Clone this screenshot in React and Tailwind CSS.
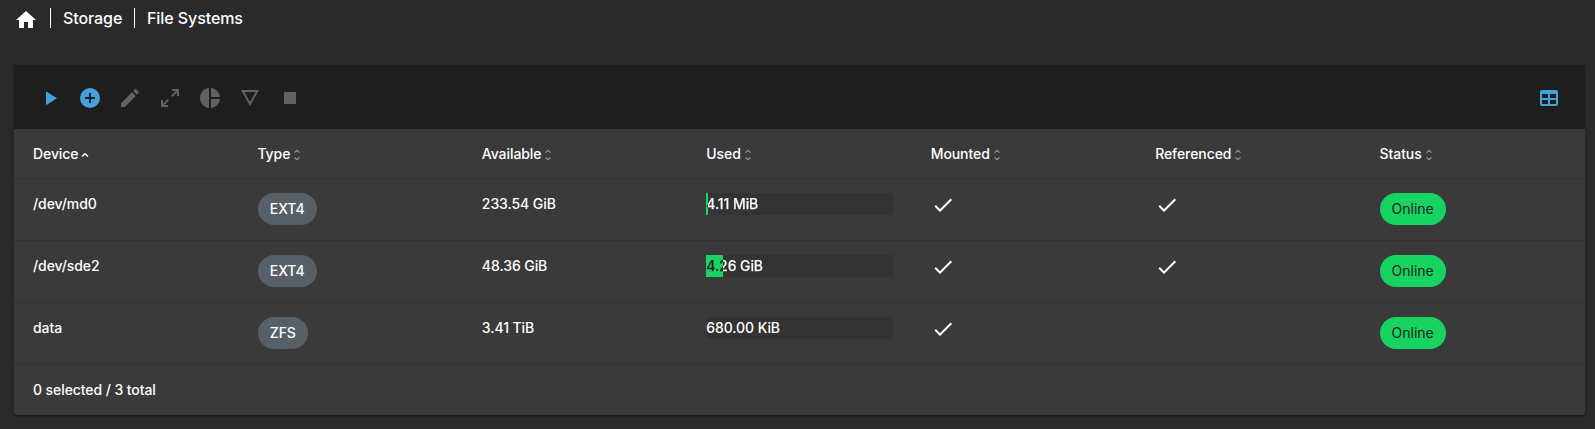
import React from "react";

const ICONS = {
  home: "M10,20V14H14V20H19V12H22L12,3L2,12H5V20H10Z",
  play: "M8,5.14V19.14L19,12.14L8,5.14Z",
  plus: "M17,13H13V17H11V13H7V11H11V7H13V11H17M12,2A10,10 0 0,0 2,12A10,10 0 0,0 12,22A10,10 0 0,0 22,12A10,10 0 0,0 12,2Z",
  pencil:
    "M20.71,7.04C21.1,6.65 21.1,6 20.71,5.63L18.37,3.29C18,2.9 17.35,2.9 16.96,3.29L15.12,5.12L18.87,8.87M3,17.25V21H6.75L17.81,9.93L14.06,6.18L3,17.25Z",
  expand:
    "M10,21V19H6.41L10.91,14.5L9.5,13.09L5,17.59V14H3V21H10M14.5,10.91L19,6.41V10H21V3H14V5H17.59L13.09,9.5L14.5,10.91Z",
  pie: "M11,2V22C5.9,21.5 2,17.2 2,12C2,6.8 5.9,2.5 11,2M13,2V11H22C21.5,6.2 17.8,2.5 13,2M13,13V22C17.7,21.5 21.5,17.8 22,13H13Z",
  unmount: "M3,4L12,20L21,4H3M6.38,6H17.63L12,16L6.38,6Z",
  stop: "M18,18H6V6H18V18Z",
  table:
    "M5,4H19A2,2 0 0,1 21,6V18A2,2 0 0,1 19,20H5A2,2 0 0,1 3,18V6A2,2 0 0,1 5,4M5,8V12H11V8H5M13,8V12H19V8H13M5,14V18H11V14H5M13,14V18H19V14H13Z",
  check: "M21,7L9,19L3.5,13.5L4.91,12.09L9,16.17L19.59,5.59L21,7Z",
};

function Icon({ name, className = "" }) {
  return (
    <svg viewBox="0 0 24 24" className={"size-6 shrink-0 " + className} fill="currentColor" fillRule="evenodd">
      <path d={ICONS[name]} />
    </svg>
  );
}

function SortIcon({ active }) {
  if (active) {
    return (
      <svg width="8" height="12" viewBox="0 0 8 12" className="ml-[3px] mt-px" fill="none" stroke="#fff" strokeWidth="1.4">
        <path d="M1 7.6L4 4.8L7 7.6" />
      </svg>
    );
  }
  return (
    <svg width="6" height="12" viewBox="0 0 6 12" className="ml-1 mt-px" fill="none" stroke="#9a9a9a" strokeWidth="1.2">
      <path d="M0.5 3.6L3 1.4L5.5 3.6M0.5 8.4L3 10.6L5.5 8.4" />
    </svg>
  );
}

function Usage({ label, fill }) {
  if (!fill) {
    return <div className="h-[22px] bg-[#333333]">{label}</div>;
  }
  return (
    <div className="h-[22px] bg-[#333333]" style={{ backgroundImage: `linear-gradient(to right, #17d461 ${fill}px, transparent ${fill}px)` }}>
      <span
        className="block bg-clip-text text-transparent leading-[22px] [-webkit-text-stroke:0.25px_transparent]"
        style={{ backgroundImage: `linear-gradient(to right, #212121 ${fill}px, #fff ${fill}px)` }}
      >
        {label}
      </span>
    </div>
  );
}

const COLUMNS = ["Device", "Type", "Available", "Used", "Mounted", "Referenced", "Status"];
const ROWS = [
  { device: "/dev/md0", type: "EXT4", available: "233.54 GiB", used: "4.11 MiB", fill: 2, mounted: true, referenced: true },
  { device: "/dev/sde2", type: "EXT4", available: "48.36 GiB", used: "4.26 GiB", fill: 17, mounted: true, referenced: true },
  { device: "data", type: "ZFS", available: "3.41 TiB", used: "680.00 KiB", fill: 0, mounted: true, referenced: false },
];
const TOOLS = ["play", "plus", "pencil", "expand", "pie", "unmount", "stop"];

export default function App() {
  return (
    <div className="h-[429px] w-full bg-[#2a2a2a] pl-3.5 pr-2.5 font-['Inter',sans-serif] text-sm font-medium tracking-[-0.08px] text-white">
      <nav className="flex h-[65px] items-start pt-2 text-base leading-5">
        <Icon name="home" />
        <span className="ml-3 h-5 w-px bg-white" />
        <span className="ml-3 w-[71px] whitespace-nowrap">Storage</span>
        <span className="h-5 w-px bg-white" />
        <span className="ml-3 whitespace-nowrap">File Systems</span>
      </nav>

      <main className="h-[350px] overflow-hidden rounded-b bg-[#3a3a3a] shadow-[0_2px_2px_-1px_rgba(0,0,0,0.45),0_1px_3px_rgba(0,0,0,0.25)]">
        <div className="flex h-16 items-center gap-4 bg-[#1e1e1e] px-6 pt-0.5">
          {TOOLS.map((tool, i) => (
            <Icon key={tool} name={tool} className={i < 2 ? "text-[#43a2dc]" : "text-[#616161]"} />
          ))}
          <Icon name="table" className="ml-auto text-[#43a2dc]" />
        </div>

        <div className="grid h-[50px] grid-cols-7 border-b border-[#333333]">
          {COLUMNS.map((col, i) => (
            <div key={col} className="flex items-center pl-[19px] pt-px">
              <span>{col}</span>
              <SortIcon active={i === 0} />
            </div>
          ))}
        </div>

        {ROWS.map((row) => (
          <div
            key={row.device}
            className="grid h-[62px] grid-cols-7 border-b border-[#343434] leading-[22px] *:px-[19px] *:pt-3.5"
          >
            <div>{row.device}</div>
            <div>
              <span className="ml-[0.4px] inline-flex h-8 items-center rounded-full bg-[#586067] px-3">{row.type}</span>
            </div>
            <div>{row.available}</div>
            <div>
              <Usage label={row.used} fill={row.fill} />
            </div>
            <div>{row.mounted && <Icon name="check" />}</div>
            <div>{row.referenced && <Icon name="check" />}</div>
            <div>
              <span className="inline-flex h-8 items-center rounded-full bg-[#17d461] px-3 font-normal tracking-normal text-[#212121]">
                Online
              </span>
            </div>
          </div>
        ))}

        <div className="flex h-[50px] items-center pl-[19px]">0 selected / 3 total</div>
      </main>
    </div>
  );
}
